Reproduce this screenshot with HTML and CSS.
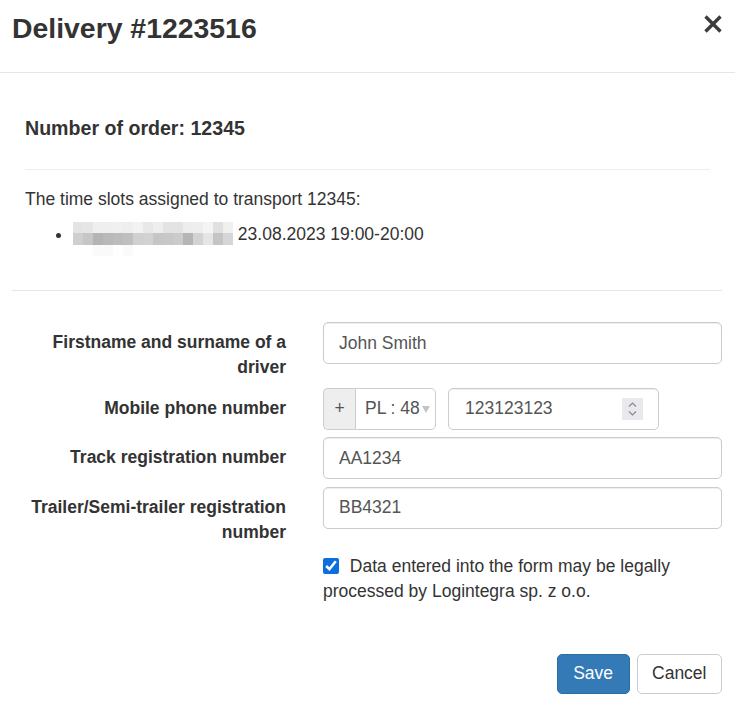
FILE: index.html
```html
<!DOCTYPE html>
<html lang="en">
<head>
<meta charset="utf-8">
<title>Delivery #1223516</title>
<link rel="stylesheet" href="styles.css">
</head>
<body>
<div class="modal">
  <div class="modal-header">
    <h4 class="modal-title">Delivery #1223516</h4>
    <button class="close" type="button" aria-label="Close">
      <svg width="20" height="20" viewBox="0 0 20 20"><path d="M2.5 2.5 L17.5 17.5 M17.5 2.5 L2.5 17.5" stroke="#3d3d3d" stroke-width="3.4" stroke-linecap="butt" fill="none"/></svg>
    </button>
  </div>
  <div class="modal-body">
    <div class="info">
      <h4 class="order">Number of order: 12345</h4>
      <hr class="sep">
      <p class="slots-title">The time slots assigned to transport 12345:</p>
      <ul class="slots">
        <li><span class="pix"></span> 23.08.2023 19:00-20:00</li>
      </ul>
    </div>
    <hr class="divider">
    <form class="form">
      <label class="lbl">Firstname and surname of a driver</label>
      <input class="ctl" type="text" value="John Smith">

      <label class="lbl">Mobile phone number</label>
      <div class="phone">
        <span class="addon">+</span>
        <span class="country">PL : 48<span class="caret"></span></span>
        <div class="ctl num">
          <span class="num-val">123123123</span>
          <span class="spin"><svg width="21" height="22" viewBox="0 0 21 22"><path d="M7 8.5 L10.5 5 L14 8.5 M7 13.5 L10.5 17 L14 13.5" stroke="#8a8a8a" stroke-width="1.2" fill="none"/></svg></span>
        </div>
      </div>

      <label class="lbl">Track registration number</label>
      <input class="ctl" type="text" value="AA1234">

      <label class="lbl">Trailer/Semi-trailer registration number</label>
      <input class="ctl" type="text" value="BB4321">

      <label class="consent"><input class="chk" type="checkbox" checked> Data entered into the form may be legally processed by Logintegra sp. z o.o.</label>
    </form>
  </div>
  <div class="modal-footer">
    <button class="btn btn-primary" type="button">Save</button>
    <button class="btn btn-default" type="button">Cancel</button>
  </div>
</div>
</body>
</html>
```
FILE: styles.css
```css
* { box-sizing: border-box; }
html, body { margin: 0; padding: 0; background: #fff; }
body {
  font-family: "Liberation Sans", Arial, sans-serif;
  font-size: 17.5px;
  line-height: 25px;
  color: #333;
}
.modal { width: 735px; }

.modal-header {
  height: 73px;
  border-bottom: 1px solid #e5e5e5;
  display: flex;
  justify-content: space-between;
  align-items: flex-start;
  padding: 13px 12px 0 12px;
}
.modal-title {
  margin: 0;
  font-size: 28.4px;
  line-height: 31px;
  font-weight: bold;
  color: #333;
}
.close {
  border: 0;
  background: transparent;
  padding: 0;
  margin-top: 1px;
  width: 20px;
  height: 20px;
  cursor: pointer;
}
.close svg { display: block; }

.info { padding: 44px 25px 0 25px; }
.order {
  margin: 0;
  font-size: 19.6px;
  line-height: 22px;
  font-weight: bold;
}
.sep {
  margin: 30px 0 0 0;
  border: 0;
  border-top: 1px solid #eee;
  height: 0;
}
.slots-title { margin: 17px 0 0 0; }
.slots {
  margin: 10px 0 0 0;
  padding-left: 48px;
}
.pix {
  display: inline-block;
  width: 160px;
  height: 34px;
  margin-bottom: -9px;
  vertical-align: top;
  background-repeat: no-repeat;
  background-size: 160px 11px, 160px 12px, 160px 11px;
  background-position: 0 0, 0 11px, 0 23px;
  background-image:
    linear-gradient(90deg, #e4e4e4 0 10px, #e6e6e6 10px 20px, #efefef 20px 30px, #efefef 30px 40px, #f0f0f0 40px 50px, #eeeeee 50px 60px, #f2f2f2 60px 70px, #e8e8e8 70px 80px, #eeeeee 80px 90px, #e3e3e3 90px 100px, #e3e3e3 100px 110px, #ededed 110px 120px, #eeeeee 120px 130px, #f4f4f4 130px 140px, #e0e0e0 140px 150px, #f0f0f0 150px 160px),
    linear-gradient(90deg, #cfcfcf 0 10px, #c6c6c6 10px 20px, #b4b4b4 20px 30px, #b9b9b9 30px 40px, #bcbcbc 40px 50px, #bfbfbf 50px 60px, #d0d0d0 60px 70px, #d2d2d2 70px 80px, #c6c6c6 80px 90px, #c8c8c8 90px 100px, #cbcbcb 100px 110px, #b5b5b5 110px 120px, #d3d3d3 120px 130px, #e5e5e5 130px 140px, #c4c4c4 140px 150px, #d6d6d6 150px 160px),
    linear-gradient(90deg, #fff 0 20px, #fafafa 20px 40px, #fff 40px 50px, #fafafa 50px 60px, #fff 60px 160px);
}

.divider {
  margin: 43px 13px 0 12px;
  border: 0;
  border-top: 1px solid #e5e5e5;
  height: 0;
}

.form {
  display: grid;
  grid-template-columns: 270px 1fr;
  column-gap: 37px;
  row-gap: 7.5px;
  padding: 31px 13px 0 16px;
  margin: 0;
}
.lbl {
  text-align: right;
  font-weight: bold;
  padding-top: 8px;
  color: #333;
}
.ctl {
  height: 42px;
  width: 100%;
  border: 1px solid #ccc;
  border-radius: 5px;
  padding: 0 15px;
  font-family: "Liberation Sans", Arial, sans-serif;
  font-size: 17.5px;
  color: #555;
  background: #fff;
  box-shadow: inset 0 1px 1px rgba(0,0,0,.075);
  outline: none;
}

.phone {
  display: flex;
  align-items: stretch;
  height: 42px;
}
.addon {
  width: 32px;
  border: 1px solid #ccc;
  border-right: 0;
  border-radius: 5px 0 0 5px;
  background: #eee;
  color: #555;
  display: flex;
  align-items: center;
  justify-content: center;
}
.country {
  width: 81px;
  border: 1px solid #ccc;
  border-radius: 0 5px 5px 0;
  color: #555;
  display: flex;
  align-items: center;
  padding-left: 9px;
}
.caret {
  width: 0;
  height: 0;
  border-left: 4.5px solid transparent;
  border-right: 4.5px solid transparent;
  border-top: 7px solid #c4c4c4;
  margin-left: 2px;
  margin-top: 1px;
}
.num {
  width: 211px;
  margin-left: 12px;
  display: flex;
  align-items: center;
  justify-content: space-between;
  padding: 0 15px 0 16px;
}
.spin {
  display: block;
  width: 21px;
  height: 22px;
  background: #e9e9ed;
}
.spin svg { display: block; }

.consent {
  grid-column: 2;
  padding-top: 1.5px;
  color: #333;
}
.chk {
  width: 16px;
  height: 16px;
  margin: 0 6px 0 0;
  vertical-align: -2px;
  accent-color: #0b6fe0;
}

.modal-footer {
  display: flex;
  justify-content: flex-end;
  gap: 7px;
  padding: 50px 13px 0 0;
}
.btn {
  height: 40px;
  padding: 0 15px;
  border-radius: 5px;
  font-family: "Liberation Sans", Arial, sans-serif;
  font-size: 17.5px;
  line-height: 25px;
  cursor: pointer;
}
.btn-primary {
  background: #337ab7;
  border: 1px solid #2e6da4;
  color: #fff;
  padding: 0 15.5px;
}
.btn-default {
  background: #fff;
  border: 1px solid #ccc;
  color: #333;
  padding: 0 14.5px;
}
```
